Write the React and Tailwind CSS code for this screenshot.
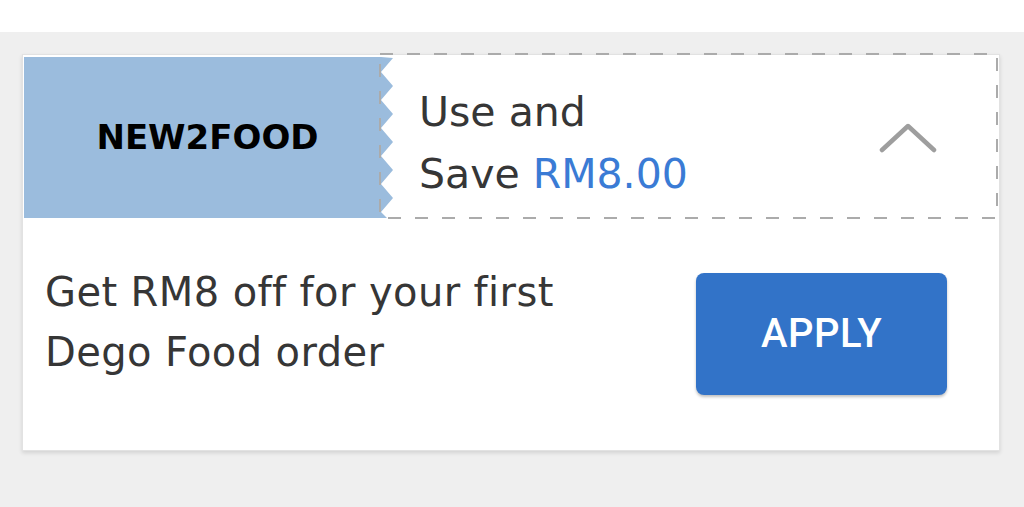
import React from "react";

const Zigzag = () => {
  // teeth every 28px down the right edge of the code stub
  const pts = ["0,0"];
  for (let y = 1; y < 161; y += 28) {
    pts.push(`12,${y}`);
    if (y + 14 <= 161) pts.push(`0,${y + 14}`);
  }
  pts.push("6,161", "0,161");
  return (
    <svg width="12" height="161" viewBox="0 0 12 161" className="shrink-0 block">
      <polygon points={pts.join(" ")} fill="#9bbcdd" />
    </svg>
  );
};

const App = () => {
  return (
    <div className="h-screen flex flex-col bg-white font-['DejaVu_Sans',sans-serif]">
      <div className="h-[32px] bg-white" />
      <div className="flex-1 bg-[#efefef] pt-[22px] pl-[22px]">
        <div className="w-[978px] bg-white border border-[#e2e2e2] shadow-[0_2px_4px_rgba(0,0,0,0.12)] px-px pt-[2px]">
          {/* voucher header */}
          <div className="flex h-[161px]">
            <div className="w-[357px] bg-[#9bbcdd] flex items-center justify-center pl-[10px]">
              <span className="text-[34px] font-bold text-black">NEW2FOOD</span>
            </div>
            <Zigzag />
            <div className="relative flex-1 flex items-center justify-between pl-[26px] pr-[61px]">
              <svg className="absolute -top-[4px] -bottom-[1px] -left-[14px] right-0 w-[calc(100%+14px)] h-[calc(100%+5px)] pointer-events-none">
                <rect
                  x="1"
                  y="1"
                  className="w-[calc(100%-2px)] h-[calc(100%-2px)]"
                  fill="none"
                  stroke="#ababab"
                  strokeWidth="2"
                  strokeDasharray="13 14"
                />
              </svg>
              <p className="text-[41px] leading-[62px] text-[#363636] pt-[10px]">
                Use and
                <br />
                Save <span className="text-[#3a7bd5]">RM8.00</span>
              </p>
              <svg width="58" height="30" viewBox="0 0 58 30" className="block">
                <polyline
                  points="3,27 29,3 55,27"
                  fill="none"
                  stroke="#9e9e9e"
                  strokeWidth="4.5"
                  strokeLinecap="round"
                  strokeLinejoin="round"
                />
              </svg>
            </div>
          </div>

          {/* details + apply */}
          <div className="flex items-center justify-between h-[232px] pl-[21px] pr-[51px]">
            <p className="text-[40px] leading-[60px] tracking-[0.4px] text-[#363636] -mt-[24px]">
              Get RM8 off for your first
              <br />
              Dego Food order
            </p>
            <button className="w-[251px] h-[122px] rounded-[8px] bg-[#3273c8] shadow-[0_2px_3px_rgba(0,0,0,0.25)] text-white text-[40px] font-medium font-['Roboto',sans-serif] tracking-[0.5px]">
              APPLY
            </button>
          </div>
        </div>
      </div>
    </div>
  );
};

export default App;
